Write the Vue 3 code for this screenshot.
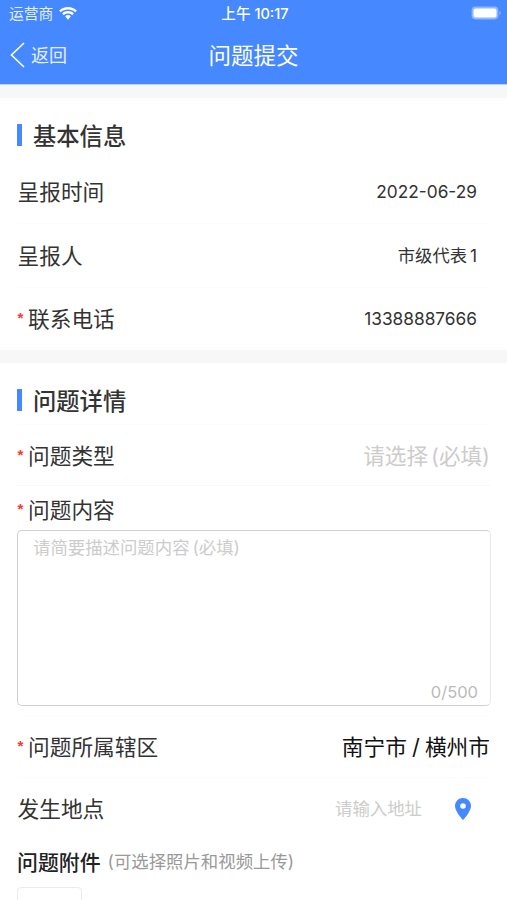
<template>
  <div class="page">
    <header class="header">
      <div class="status-bar">
        <div class="carrier">
          <span>运营商</span>
          <svg class="wifi" viewBox="0 0 18 13">
            <path d="M9 0C5.6 0 2.500 1.300 0.200 3.500L1.700 5.200C3.600 3.400 6.200 2.500 9 2.500s5.400 0.900 7.300 2.700l1.500-1.700C15.500 1.300 12.400 0 9 0z" />
            <path d="M9 4c-2.300 0-4.300 0.900-5.800 2.300l1.500 1.900C5.800 7.100 7.300 6.600 9 6.600s3.200 0.500 4.300 1.600l1.500-1.900C13.300 4.900 11.300 4 9 4z" />
            <path d="M9 8.100c-1.100 0-2.100 0.400-2.800 1.100L9 12.700l2.800-3.500C11.100 8.500 10.100 8.100 9 8.100z" />
          </svg>
        </div>
        <span class="time">上午 10:17</span>
        <svg class="battery" viewBox="0 0 30 14">
          <rect x="0.600" y="0.600" width="26.800" height="12.800" rx="3.800" />
          <rect class="level" x="2.500" y="2.500" width="23" height="9" rx="2" />
          <path d="M28.500 4.800v4.400c1.600-0.700 1.600-3.700 0-4.400z" />
        </svg>
      </div>
      <div class="nav-bar">
        <button class="back-btn">
          <svg class="back-icon" viewBox="0 0 15 26">
            <path d="M14 1L1.500 13L14 25" />
          </svg>
          <span>返回</span>
        </button>
        <h1>问题提交</h1>
      </div>
    </header>

    <section class="section">
      <h2>基本信息</h2>
      <div v-for="item in baseInfo" :key="item.label" class="row base-row">
        <label :class="{ required: item.required }">{{ item.label }}</label>
        <span class="value">{{ item.value }}<span v-if="item.level" class="level-no">{{ item.level }}</span></span>
      </div>
    </section>

    <section class="section detail">
      <h2>问题详情</h2>
      <div class="row type-row">
        <label class="required">问题类型</label>
        <span class="select">请选择 (必填)</span>
      </div>
      <div class="content-block">
        <label class="required">问题内容</label>
        <div class="content-box">
          <textarea v-model="content" maxlength="500" placeholder="请简要描述问题内容 (必填)"></textarea>
          <span class="count">{{ content.length }}/500</span>
        </div>
      </div>
      <div class="row">
        <label class="required">问题所属辖区</label>
        <span class="area">南宁市 / 横州市</span>
      </div>
      <div class="row place-row">
        <label>发生地点</label>
        <div class="address">
          <input v-model="address" placeholder="请输入地址" />
          <svg class="pin" viewBox="0 0 16 22">
            <path fill-rule="evenodd" d="M8 0C3.600 0 0 3.500 0 7.900C0 13.500 8 22 8 22s8-8.500 8-14.100C16 3.500 12.400 0 8 0zM8 5.200a2.800 2.800 0 1 1 0 5.600a2.800 2.800 0 0 1 0-5.600z" />
          </svg>
        </div>
      </div>
      <div class="attach">
        <span class="attach-title">问题附件</span>
        <span class="attach-tip">(可选择照片和视频上传)</span>
      </div>
      <div class="upload"></div>
    </section>
  </div>
</template>

<script setup>
import { ref } from 'vue'

const baseInfo = [
  { label: '呈报时间', value: '2022-06-29' },
  { label: '呈报人', value: '市级代表', level: '1' },
  { label: '联系电话', value: '13388887666', required: true }
]

const content = ref('')
const address = ref('')
</script>

<style>
body {
  margin: 0;
  overflow: hidden;
}
</style>

<style scoped>
.page {
  height: 900px;
  overflow: hidden;
  background: #f7f7f7;
  color: #333;
  font-family: Inter, "Noto Sans CJK SC", sans-serif;
}

.header {
  height: 84px;
  background: #4588ff;
  border-bottom: 1px solid #b9d2fc;
  color: #fff;
}

.status-bar {
  display: grid;
  grid-template-columns: 1fr auto 1fr;
  align-items: center;
  height: 26px;
  padding: 0 6px 0 9px;
  font-size: 14.8px;
  line-height: 20px;
}

.carrier {
  display: flex;
  align-items: center;
  gap: 6px;
  color: #e6efff;
}

.carrier span,
.time {
  padding-top: 2px;
}

.wifi {
  width: 18px;
  height: 13px;
  fill: #fff;
}

.time {
  font-size: 14.6px;
  font-weight: 500;
}

.battery {
  justify-self: end;
  width: 30px;
  height: 14px;
  fill: #8fb7ff;
}

.battery .level {
  fill: #fff;
}

.nav-bar {
  display: grid;
  grid-template-columns: 1fr auto 1fr;
  align-items: center;
  height: 55px;
  padding: 0 10px;
}

.back-btn {
  display: flex;
  align-items: center;
  gap: 6px;
  padding: 2px 0 0;
  border: none;
  background: none;
  color: #e9f1ff;
  font-family: inherit;
  font-size: 18px;
  line-height: 24px;
}

.back-btn span {
  padding-top: 2px;
}

.back-icon {
  width: 15px;
  height: 26px;
  fill: none;
  stroke: #fff;
  stroke-width: 1.6;
}

h1 {
  margin: 0;
  font-size: 22.5px;
  font-weight: 400;
}

.section {
  margin-top: 13px;
  padding: 13px 17px 0;
  background: #fff;
}

h2 {
  display: flex;
  align-items: center;
  gap: 11px;
  box-sizing: border-box;
  height: 48px;
  margin: 0;
  padding-top: 3px;
  font-size: 23.3px;
  font-weight: 500;
  line-height: 34px;
}

h2::before {
  content: "";
  width: 5px;
  height: 22px;
  margin-bottom: 3px;
  background: #4588ff;
}

.row {
  display: flex;
  align-items: center;
  justify-content: space-between;
  box-sizing: border-box;
  height: 61px;
  border-top: 1px solid #fcfcfc;
}

.base-row {
  height: 64px;
  padding-right: 13px;
}

.base-row:last-child {
  height: 63px;
}

h2 + .base-row {
  border-top-color: transparent;
}

label {
  display: flex;
  align-items: center;
  padding-left: 0.5px;
  font-size: 21.7px;
  line-height: 32px;
}

.required::before {
  content: "*";
  box-sizing: border-box;
  width: 10.5px;
  padding-bottom: 2px;
  color: #f33;
  font-family: "Liberation Sans", sans-serif;
  font-size: 15px;
  font-weight: 700;
  line-height: 16px;
}

.value {
  font-size: 17.3px;
  line-height: 24px;
}

.level-no {
  margin-left: 3px;
}

.detail {
  height: 560px;
}

.type-row {
  padding-top: 2px;
}

.select {
  color: #ccc;
  font-size: 21.6px;
  line-height: 32px;
  word-spacing: -3px;
}

.content-block {
  padding: 8px 0 10px;
  border-top: 1px solid #f8f8f8;
}

.content-box {
  position: relative;
  box-sizing: border-box;
  width: 474px;
  height: 176px;
  margin-top: 4px;
  border: 1px solid #d0d0d0;
  border-right-color: #e8e8e8;
  border-radius: 5px;
}

textarea {
  display: block;
  box-sizing: border-box;
  width: 100%;
  height: 146px;
  padding: 4px 15px;
  border: none;
  outline: none;
  background: none;
  resize: none;
  font-family: inherit;
  font-size: 17.4px;
  line-height: 25px;
  word-spacing: -2px;
}

textarea::placeholder,
input::placeholder {
  color: #ccc;
}

.count {
  position: absolute;
  right: 12px;
  bottom: 3px;
  color: #bbb;
  font-size: 16.5px;
}

.area {
  color: #111;
  font-size: 21.7px;
  line-height: 32px;
  word-spacing: -1px;
}

.place-row {
  padding-top: 1px;
}

.address {
  display: flex;
  align-items: center;
  gap: 33px;
  padding-right: 19px;
}

input {
  width: 200px;
  padding: 0;
  border: none;
  outline: none;
  background: none;
  font-family: inherit;
  font-size: 17.4px;
  text-align: right;
}

.pin {
  width: 16px;
  height: 22px;
  fill: #4588ff;
}

.attach {
  display: flex;
  align-items: center;
  gap: 7px;
  height: 49px;
  line-height: 32px;
}

.attach-title {
  padding-top: 1px;
  color: #222;
  font-size: 20.9px;
  font-weight: 500;
}

.attach-tip {
  margin-top: -2px;
  color: #999;
  font-size: 17.4px;
}

.upload {
  box-sizing: border-box;
  width: 65px;
  height: 65px;
  border: 1px solid #ebebeb;
  border-radius: 4px;
}
</style>
